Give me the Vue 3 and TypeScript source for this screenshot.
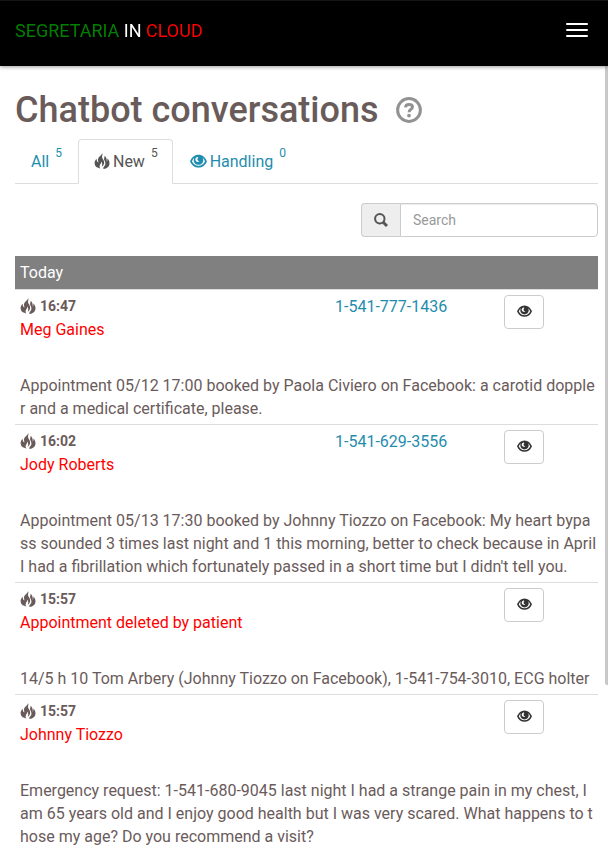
<script setup lang="ts">
import { computed, ref } from 'vue'

interface Conversation {
  id: number
  time: string
  title: string
  phone?: string
  message: string
}

type TabKey = 'all' | 'new' | 'handling'

const conversations: Conversation[] = [
  {
    id: 1,
    time: '16:47',
    title: 'Meg Gaines',
    phone: '1-541-777-1436',
    message:
      'Appointment 05/12 17:00 booked by Paola Civiero on Facebook: a carotid doppler and a medical certificate, please.',
  },
  {
    id: 2,
    time: '16:02',
    title: 'Jody Roberts',
    phone: '1-541-629-3556',
    message:
      "Appointment 05/13 17:30 booked by Johnny Tiozzo on Facebook: My heart bypass sounded 3 times last night and 1 this morning, better to check because in April I had a fibrillation which fortunately passed in a short time but I didn't tell you.",
  },
  {
    id: 3,
    time: '15:57',
    title: 'Appointment deleted by patient',
    message: '14/5 h 10 Tom Arbery (Johnny Tiozzo on Facebook), 1-541-754-3010, ECG holter',
  },
  {
    id: 4,
    time: '15:57',
    title: 'Johnny Tiozzo',
    message:
      'Emergency request: 1-541-680-9045 last night I had a strange pain in my chest, I am 65 years old and I enjoy good health but I was very scared. What happens to those my age? Do you recommend a visit?',
  },
]

const tabs: { key: TabKey; label: string; count: number }[] = [
  { key: 'all', label: 'All', count: 5 },
  { key: 'new', label: 'New', count: 5 },
  { key: 'handling', label: 'Handling', count: 0 },
]

const activeTab = ref<TabKey>('new')
const search = ref('')

const visible = computed(() => {
  const needle = search.value.trim().toLowerCase()
  if (activeTab.value === 'handling') return []
  return conversations.filter((c) =>
    `${c.title} ${c.phone ?? ''} ${c.message}`.toLowerCase().includes(needle),
  )
})
</script>

<template>
  <svg class="sprite" aria-hidden="true">
    <symbol id="icon-fire" viewBox="0 0 16 16">
      <path
        d="M8 0C8.2 1.8 5.4 3.1 4.3 5.3C3.6 6.8 4.2 8 4.5 9.6C3.2 9 2.5 7.6 2.7 5.8C1.2 7 .5 8.8 .6 10.6C.8 13.4 3 15.2 6.6 15.4C5.4 14.6 5.2 13.4 5.8 12.2C6.4 11.2 7.4 10.4 7.3 8.6C8.3 9.8 8.5 11.6 7.8 13.8C9.6 12.6 10.4 10.8 10.1 8.8C9.8 6.8 8.2 6 8 4.1C7.9 2.6 9 1.4 8 0Z"
      />
      <path
        d="M10.4 2.8C11 4.4 9.8 5.2 10.1 6.6C10.4 7.8 11.6 8.8 11.4 11C11.2 12.8 9.8 13.4 9.4 14.5C9.2 15.2 9.3 15.7 9.6 16C13 15.5 15.5 13.5 15.5 10.2C15.5 8.2 14.6 6.6 13.3 5.6C13.6 6.8 13.4 8 12.8 8.8C12.9 6.4 12.4 4 10.4 2.8Z"
      />
      <path d="M2 9C1.6 12 3.4 14 5.4 14.4C4.8 12.6 5.6 11.6 6.4 10.6L4.6 10Z" />
    </symbol>
    <symbol id="icon-eye" viewBox="0 0 16 14">
      <path
        fill-rule="evenodd"
        d="M0 7.2C1.6 3.4 4.4 1 8 1S14.4 3.4 16 7.2C14.4 11 11.6 13.2 8 13.2S1.6 11 0 7.2ZM1.9 7.2C3.1 9.9 5.2 11.4 8 11.4S12.9 9.9 14.1 7.2C13.5 5.7 12.7 4.5 11.7 3.7C12.3 4.5 12.5 5.4 12.5 6.2C12.5 8.7 10.5 10.6 8 10.6S3.5 8.7 3.5 6.2C3.5 5.4 3.7 4.5 4.3 3.7C3.3 4.5 2.5 5.7 1.9 7.2ZM6.3 3.4C5.2 4.1 4.8 5.3 5.2 6.4C5.8 8 7.8 8.4 8.9 7.2C7.7 7.2 6.9 6.4 7 5.4C7 4.7 7.4 4.2 7.9 3.8C7.5 3.3 6.9 3.1 6.3 3.4Z"
      />
    </symbol>
  </svg>

  <header class="navbar">
    <a class="brand" href="#"
      ><span class="brand-green">SEGRETARIA</span> IN <span class="brand-red">CLOUD</span></a
    >
    <button class="toggle" type="button" aria-label="Menu">
      <span class="bar"></span>
      <span class="bar"></span>
      <span class="bar"></span>
    </button>
  </header>
  <div class="scroll-thumb" aria-hidden="true"></div>

  <main class="page">
    <div class="heading">
      <h1>Chatbot conversations</h1>
      <a class="help" href="#" aria-label="Help">
        <svg viewBox="0 0 26 26" width="26" height="26">
          <circle cx="13" cy="13" r="11.4" />
          <path d="M9.5 10.4C9.6 8.4 11 7.6 13 7.6C15.2 7.6 16.5 8.5 16.5 10.1C16.5 12.4 13.1 12.2 13.1 15.2" />
          <circle class="dot" cx="13" cy="18.6" r="1.9" />
        </svg>
      </a>
    </div>

    <nav class="tabs">
      <a
        v-for="tab in tabs"
        :key="tab.key"
        href="#"
        class="tab"
        :class="{ active: tab.key === activeTab }"
        @click.prevent="activeTab = tab.key"
      >
        <svg v-if="tab.key === 'new'" class="icon"><use href="#icon-fire" /></svg>
        <svg v-if="tab.key === 'handling'" class="icon eye"><use href="#icon-eye" /></svg>
        <span>{{ tab.label }}</span>
        <span class="count">{{ tab.count }}</span>
      </a>
    </nav>

    <div class="search">
      <label class="addon" for="search" aria-label="Search">
        <svg viewBox="0 0 14 14" width="14" height="14">
          <circle cx="5.8" cy="5.8" r="4.7" />
          <path d="M9.2 9.2L13 13" />
        </svg>
      </label>
      <input id="search" v-model="search" type="text" placeholder="Search" />
    </div>

    <section>
      <h2 class="day">Today</h2>
      <ul class="list">
        <li v-for="c in visible" :key="c.id" class="row">
          <div class="summary">
            <div>
              <div class="time">
                <svg class="icon fire"><use href="#icon-fire" /></svg>
                <strong>{{ c.time }}</strong>
              </div>
              <div class="title">{{ c.title }}</div>
            </div>
            <div>
              <a v-if="c.phone" class="phone" :href="`tel:${c.phone}`">{{ c.phone }}</a>
            </div>
            <div>
              <button class="view" type="button" aria-label="Handle">
                <svg class="icon small"><use href="#icon-eye" /></svg>
              </button>
            </div>
          </div>
          <p class="message">{{ c.message }}</p>
        </li>
      </ul>
    </section>
  </main>
</template>

<style>
html {
  scrollbar-width: none;
}
body {
  background: #fff;
}
</style>

<style scoped>
* {
  box-sizing: border-box;
}
.sprite {
  position: absolute;
  width: 0;
  height: 0;
}
.navbar {
  position: sticky;
  top: 0;
  z-index: 2;
  display: flex;
  align-items: flex-start;
  justify-content: space-between;
  height: 66px;
  padding: 19px 15px 0;
  background: #000;
  border-top: 1px solid #141414;
  box-shadow: 0 1px 4px rgba(0, 0, 0, 0.4);
  font-family: Roboto, sans-serif;
}
.brand {
  color: #fff;
  font-size: 18px;
  line-height: 22px;
  text-decoration: none;
}
.brand-green {
  color: #008000;
}
.brand-red {
  color: #f00;
}
.toggle {
  display: flex;
  flex-direction: column;
  gap: 4px;
  margin: 0 5px 0 0;
  padding: 3px 0;
  background: none;
  border: 0;
}
.bar {
  width: 22px;
  height: 2px;
  border-radius: 1px;
  background: #fff;
}
.scroll-thumb {
  position: fixed;
  top: 0;
  right: 0;
  z-index: 1;
  width: 3px;
  height: 81vh;
  border-radius: 0 0 0 2px;
  background: #c8c8c8;
}
.page {
  padding: 25px 10px 0 15px;
  color: #6a5b5b;
  font-family: Roboto, sans-serif;
  font-size: 16px;
  line-height: 23px;
}
.heading {
  display: flex;
  align-items: flex-start;
  gap: 18px;
}
h1 {
  margin: 0;
  font-size: 36px;
  font-weight: 500;
  line-height: 39px;
}
.help {
  margin-top: 6px;
}
.help svg {
  display: block;
  fill: none;
  stroke: #929292;
  stroke-width: 3;
}
.help .dot {
  fill: #929292;
  stroke: none;
}
.tabs {
  display: flex;
  gap: 1px;
  margin-top: 9px;
  border-bottom: 1px solid #ddd;
}
.tab {
  display: flex;
  gap: 3px;
  margin-bottom: -1px;
  padding: 10px 14px 10px 15px;
  border: 1px solid transparent;
  border-radius: 4px 4px 0 0;
  color: #1f8dad;
  text-decoration: none;
}
.tab.active {
  color: #555;
  background: #fff;
  border-color: #ddd;
  border-bottom-color: #fff;
}
.count {
  margin: -8px 0 8px 3px;
  font-size: 12px;
}
.icon {
  width: 16px;
  height: 16px;
  margin-top: 3px;
  flex: none;
  fill: currentColor;
}
.icon.eye {
  width: 17px;
}
.search {
  display: flex;
  width: 237px;
  height: 34px;
  margin: 19px 0 19px auto;
}
.addon {
  display: flex;
  align-items: center;
  justify-content: center;
  flex: none;
  width: 39px;
  background: #eee;
  border: 1px solid #ccc;
  border-right: 0;
  border-radius: 4px 0 0 4px;
}
.addon svg {
  fill: none;
  stroke: #555;
  stroke-width: 2;
}
.addon path {
  stroke-width: 3;
}
.search input {
  flex: 1;
  min-width: 0;
  padding: 6px 12px;
  border: 1px solid #ccc;
  border-radius: 0 4px 4px 0;
  box-shadow: inset 0 1px 1px rgba(0, 0, 0, 0.075);
  color: #555;
  font-family: Roboto, sans-serif;
  font-size: 14px;
}
.search input::placeholder {
  color: #999;
}
.day {
  margin: 0;
  padding: 5px;
  background: #808080;
  color: #fff;
  font-size: 16px;
  font-weight: 400;
  line-height: 23px;
}
.list {
  margin: 0;
  padding: 0;
  list-style: none;
}
.row {
  padding: 5px 1px 4px 5px;
  border-top: 1px solid #ddd;
}
.summary {
  display: grid;
  grid-template-columns: 315fr 169fr 93fr;
  height: 46px;
}
.time {
  display: flex;
  gap: 4px;
  font-size: 14px;
}
.icon.fire {
  margin-top: 3px;
}
.title {
  color: #f00;
}
.phone {
  color: #1f8dad;
  text-decoration: none;
}
.view {
  display: flex;
  align-items: center;
  justify-content: center;
  width: 40px;
  height: 34px;
  padding: 0 0 2px;
  background: #fff;
  border: 1px solid #ccc;
  border-radius: 4px;
  color: #333;
}
.icon.small {
  width: 15px;
  height: 14px;
  margin: 0;
}
.message {
  margin: 33px 0 0;
  word-break: break-all;
}
</style>
